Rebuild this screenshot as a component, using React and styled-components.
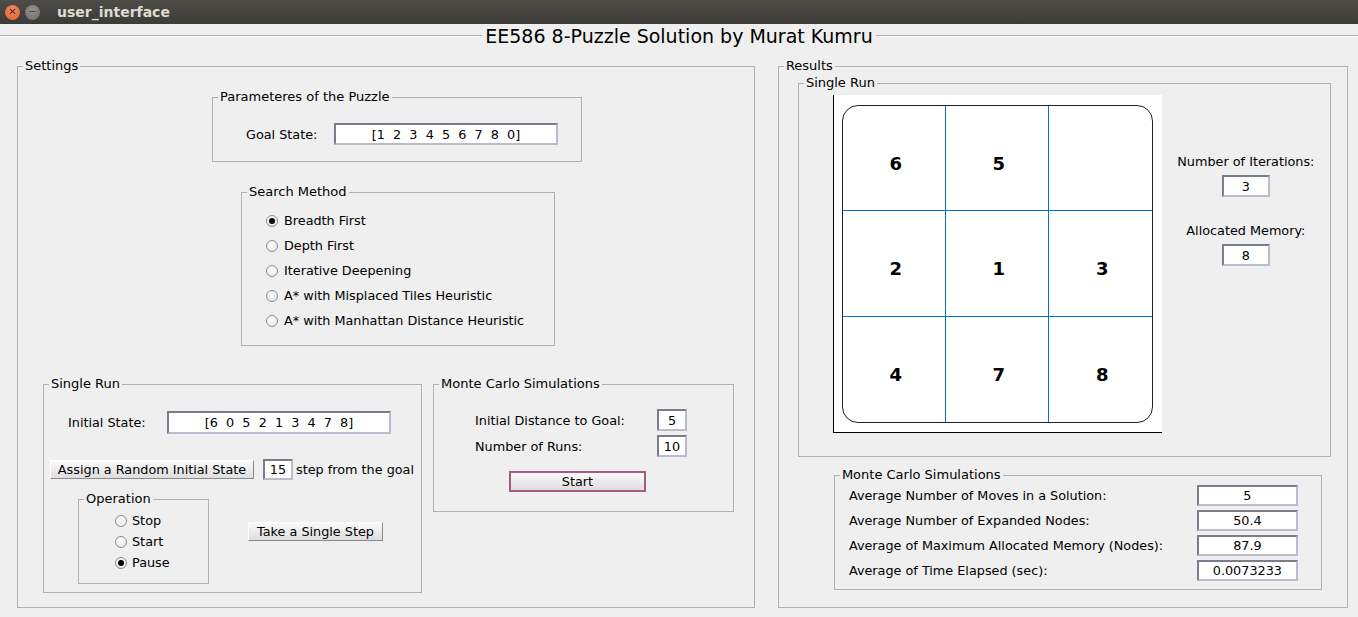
import React from 'react';
import styled, { createGlobalStyle } from 'styled-components';

const GlobalStyle = createGlobalStyle`
  html, body {
    margin: 0;
    padding: 0;
  }
  body {
    background: #efefef;
    font-family: "DejaVu Sans", "Liberation Sans", sans-serif;
    font-size: 12.8px;
    color: #000;
    overflow: hidden;
  }
`;

const Window = styled.div`
  width: 1358px;
  height: 617px;
  display: flex;
  flex-direction: column;
  background: #efefef;
  overflow: hidden;
`;

const TitleBar = styled.div`
  height: 24px;
  flex: none;
  display: flex;
  align-items: center;
  gap: 5px;
  padding-left: 5px;
  background: linear-gradient(#4d4c47, #3c3b37);
  color: #dfdbd2;
  font-size: 14px;
  font-weight: bold;
`;

const WinButton = styled.span`
  width: 15px;
  height: 15px;
  border-radius: 50%;
  display: flex;
  align-items: center;
  justify-content: center;
  font-size: 10px;
  line-height: 1;
  font-weight: normal;
  color: ${(p) => (p.$close ? '#4a2414' : '#3c3b37')};
  background: ${(p) =>
    p.$close
      ? 'radial-gradient(circle at 50% 35%, #f59066, #df5a2a)'
      : 'radial-gradient(circle at 50% 35%, #95938d, #6f6d68)'};
`;

const WindowTitle = styled.span`
  margin-left: 12px;
`;

const Heading = styled.div`
  height: 24px;
  flex: none;
  display: flex;
  align-items: center;
  &::before,
  &::after {
    content: '';
    flex: 1;
    height: 1px;
    background: #b1b1b1;
    border-bottom: 1px solid #fff;
  }
`;

const HeadingText = styled.span`
  font-size: 19px;
  padding: 0 3px;
`;

const Columns = styled.div`
  display: flex;
  align-items: flex-start;
  gap: 23px;
  padding: 10px 10px 0 17px;
`;

const Group = styled.fieldset`
  margin: 0;
  padding: 0;
  min-width: 0;
  box-sizing: border-box;
  border: 1px solid #b1b1b1;
  width: ${(p) => p.$w}px;
`;

const Legend = styled.legend`
  margin-left: 5px;
  padding: 0 2px;
  font-size: 13px;
  line-height: 16px;
`;

const GroupBody = styled.div`
  padding: ${(p) => p.$pad};
`;

const MainPanel = styled(Group)`
  height: 550px;
`;

const ParamsGroup = styled(Group)`
  margin: 15px 0 0 194px;
`;

const SearchGroup = styled(Group)`
  margin: 22px 0 0 223px;
`;

const FieldRow = styled.div`
  display: flex;
  align-items: center;
  padding: 18px 0 16px 33px;
`;

const FieldLabel = styled.span`
  width: ${(p) => p.$w}px;
  flex: none;
`;

const TextBox = styled.div`
  box-sizing: border-box;
  flex: none;
  width: ${(p) => p.$w}px;
  height: ${(p) => p.$h || 22}px;
  background: #fff;
  border: 2px solid;
  border-color: #7d7d89 #babccd #babccd #7d7d89;
  display: flex;
  align-items: center;
  justify-content: center;
  white-space: pre;
`;

const RadioList = styled.div`
  display: flex;
  flex-direction: column;
  padding: ${(p) => p.$pad};
`;

const RadioRow = styled.label`
  display: flex;
  align-items: center;
  gap: ${(p) => p.$gap || 6}px;
  height: ${(p) => p.$h}px;
`;

const RadioDot = styled.span`
  box-sizing: border-box;
  width: 12px;
  height: 12px;
  flex: none;
  border-radius: 50%;
  border: 1px solid #8c8c8c;
  background: radial-gradient(circle at 45% 35%, #ffffff, #e2e2e2);
  display: flex;
  align-items: center;
  justify-content: center;
  &::after {
    content: '';
    width: 6px;
    height: 6px;
    border-radius: 50%;
    background: #000;
    display: ${(p) => (p.$on ? 'block' : 'none')};
  }
`;

const BottomRow = styled.div`
  display: flex;
  align-items: flex-start;
  gap: 11px;
  margin-top: 30px;
  padding-left: 25px;
`;

const StateRow = styled.div`
  display: flex;
  align-items: center;
  margin: 19px 0 0 18px;
`;

const RandomRow = styled.div`
  display: flex;
  align-items: center;
  margin-top: 25px;
`;

const StepText = styled.span`
  margin-left: 3px;
`;

const OperationRow = styled.div`
  display: flex;
  align-items: flex-start;
  margin: 11px 0 0 28px;
`;

const PushButton = styled.button`
  box-sizing: border-box;
  flex: none;
  width: ${(p) => p.$w}px;
  height: ${(p) => p.$h || 19}px;
  margin: ${(p) => p.$m || '0'};
  padding: 0;
  font-family: inherit;
  font-size: 12.8px;
  color: #000;
  background: linear-gradient(#fafafa, #dedede);
  border: 1px solid;
  border-color: #fdfdfd #8a8a8a #8a8a8a #fdfdfd;
  ${(p) => p.$focused && 'border: 2px solid #a65c82;'}
`;

const MonteRow = styled.div`
  display: flex;
  align-items: center;
  & + & {
    margin-top: 4px;
  }
`;

const ResultRunGroup = styled(Group)`
  margin: 1px 0 0 19px;
`;

const ResultBody = styled.div`
  display: flex;
  padding: 4px 0 23px 34px;
`;

const Axes = styled.div`
  box-sizing: border-box;
  width: 329px;
  height: 338px;
  flex: none;
  background: #fff;
  border-left: 1px solid #000;
  border-bottom: 1px solid #000;
  padding: 10px 0 0 8px;
`;

const Board = styled.div`
  box-sizing: border-box;
  width: 311px;
  height: 318px;
  border: 1px solid #222;
  border-radius: 16px;
  display: grid;
  grid-template-columns: repeat(3, 1fr);
  grid-template-rows: repeat(3, 1fr);
  overflow: hidden;
`;

const Tile = styled.div`
  display: flex;
  align-items: center;
  justify-content: center;
  padding: 11px 0 0 4px;
  font-size: 18px;
  font-weight: bold;
  border-right: ${(p) => (p.$lastCol ? 'none' : '1px solid #0072bd')};
  border-bottom: ${(p) => (p.$lastRow ? 'none' : '1px solid #0072bd')};
`;

const SideInfo = styled.div`
  flex: 1;
  display: flex;
  flex-direction: column;
  align-items: center;
  padding-top: 59px;
`;

const InfoLabel = styled.div`
  line-height: 16px;
  margin-top: ${(p) => p.$top || 0}px;
`;

const InfoBox = styled(TextBox)`
  margin-top: 5px;
`;

const MonteResultGroup = styled(Group)`
  margin: 10px 0 0 55px;
`;

const StatRow = styled.div`
  display: flex;
  align-items: center;
  & + & {
    margin-top: 4px;
  }
`;

const searchMethods = [
  'Breadth First',
  'Depth First',
  'Iterative Deepening',
  'A* with Misplaced Tiles Heuristic',
  'A* with Manhattan Distance Heuristic',
];

const operations = ['Stop', 'Start', 'Pause'];

const board = [6, 5, 0, 2, 1, 3, 4, 7, 8];

const stats = [
  ['Average Number of Moves in a Solution:', '5'],
  ['Average Number of Expanded Nodes:', '50.4'],
  ['Average of Maximum Allocated Memory (Nodes):', '87.9'],
  ['Average of Time Elapsed (sec):', '0.0073233'],
];

export default function App() {
  return (
    <Window>
      <GlobalStyle />
      <TitleBar>
        <WinButton $close>✕</WinButton>
        <WinButton>−</WinButton>
        <WindowTitle>user_interface</WindowTitle>
      </TitleBar>
      <Heading>
        <HeadingText>EE586 8-Puzzle Solution by Murat Kumru</HeadingText>
      </Heading>
      <Columns>
        <MainPanel $w={739}>
          <Legend>Settings</Legend>
          <ParamsGroup $w={370}>
            <Legend>Parameteres of the Puzzle</Legend>
            <FieldRow>
              <FieldLabel $w={88}>Goal State:</FieldLabel>
              <TextBox $w={224}>{'[1  2  3  4  5  6  7  8  0]'}</TextBox>
            </FieldRow>
          </ParamsGroup>
          <SearchGroup $w={314}>
            <Legend>Search Method</Legend>
            <RadioList $pad="8px 0 12px 24px">
              {searchMethods.map((m, i) => (
                <RadioRow key={m} $h={25}>
                  <RadioDot $on={i === 0} />
                  {m}
                </RadioRow>
              ))}
            </RadioList>
          </SearchGroup>
          <BottomRow>
            <Group $w={379}>
              <Legend>Single Run</Legend>
              <GroupBody $pad="0 0 8px 6px">
                <StateRow>
                  <FieldLabel $w={99}>Initial State:</FieldLabel>
                  <TextBox $w={224} $h={23}>{'[6  0  5  2  1  3  4  7  8]'}</TextBox>
                </StateRow>
                <RandomRow>
                  <PushButton $w={204} $m="0 9px 0 0">Assign a Random Initial State</PushButton>
                  <TextBox $w={30} $h={21}>15</TextBox>
                  <StepText>step from the goal</StepText>
                </RandomRow>
                <OperationRow>
                  <Group $w={131}>
                    <Legend>Operation</Legend>
                    <RadioList $pad="3px 0 10px 36px">
                      {operations.map((o) => (
                        <RadioRow key={o} $h={21} $gap={5}>
                          <RadioDot $on={o === 'Pause'} />
                          {o}
                        </RadioRow>
                      ))}
                    </RadioList>
                  </Group>
                  <PushButton $w={135} $m="31px 0 0 39px">Take a Single Step</PushButton>
                </OperationRow>
              </GroupBody>
            </Group>
            <Group $w={301}>
              <Legend>Monte Carlo Simulations</Legend>
              <GroupBody $pad="17px 0 19px 41px">
                <MonteRow>
                  <FieldLabel $w={182}>Initial Distance to Goal:</FieldLabel>
                  <TextBox $w={30}>5</TextBox>
                </MonteRow>
                <MonteRow>
                  <FieldLabel $w={182}>Number of Runs:</FieldLabel>
                  <TextBox $w={30}>10</TextBox>
                </MonteRow>
                <PushButton $w={137} $h={21} $m="14px 0 0 34px" $focused>
                  Start
                </PushButton>
              </GroupBody>
            </Group>
          </BottomRow>
        </MainPanel>
        <MainPanel $w={571}>
          <Legend>Results</Legend>
          <ResultRunGroup $w={533}>
            <Legend>Single Run</Legend>
            <ResultBody>
              <Axes>
                <Board>
                  {board.map((n, i) => (
                    <Tile key={i} $lastCol={i % 3 === 2} $lastRow={i >= 6}>
                      {n === 0 ? '' : n}
                    </Tile>
                  ))}
                </Board>
              </Axes>
              <SideInfo>
                <InfoLabel>Number of Iterations:</InfoLabel>
                <InfoBox $w={48}>3</InfoBox>
                <InfoLabel $top={26}>Allocated Memory:</InfoLabel>
                <InfoBox $w={48}>8</InfoBox>
              </SideInfo>
            </ResultBody>
          </ResultRunGroup>
          <MonteResultGroup $w={488}>
            <Legend>Monte Carlo Simulations</Legend>
            <GroupBody $pad="2px 0 8px 14px">
              {stats.map(([label, value]) => (
                <StatRow key={label}>
                  <FieldLabel $w={348}>{label}</FieldLabel>
                  <TextBox $w={101} $h={21}>{value}</TextBox>
                </StatRow>
              ))}
            </GroupBody>
          </MonteResultGroup>
        </MainPanel>
      </Columns>
    </Window>
  );
}
